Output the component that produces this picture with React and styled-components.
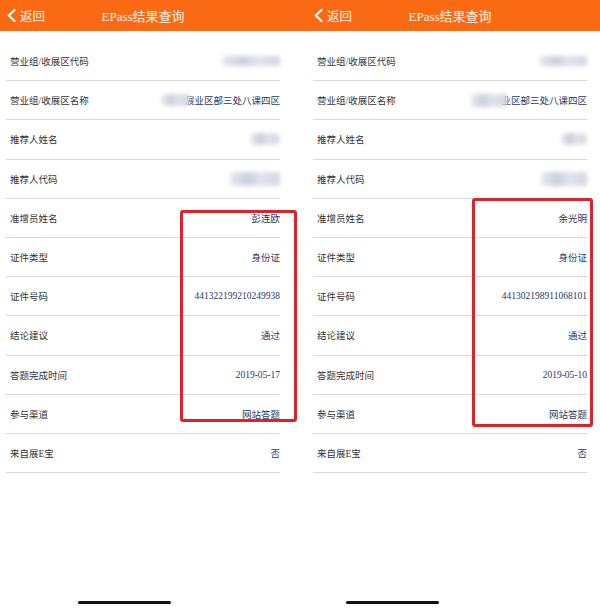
import React from 'react'
import styled, { createGlobalStyle } from 'styled-components'

const GlobalStyle = createGlobalStyle`
  html, body {
    margin: 0;
    padding: 0;
    background: #fff;
  }
  body {
    font-family: "Liberation Serif", "Noto Sans CJK SC", serif;
  }
`

const Page = styled.div`
  display: flex;
  gap: 21px;
  width: 600px;
  height: 611px;
  overflow: hidden;
  background: linear-gradient(#fa6a14 31px, #fff 31px);
`

const Phone = styled.div`
  position: relative;
  display: flex;
  flex-direction: column;
  width: 286px;
  height: 611px;
  flex-shrink: 0;
`

const Header = styled.div`
  display: grid;
  grid-template-columns: 1fr auto 1fr;
  align-items: center;
  height: 31px;
  background: #fa6a14;
  color: #fff;
`

const Back = styled.div`
  display: flex;
  align-items: center;
  gap: 4px;
  padding-left: 7px;
  font-family: "Noto Sans CJK SC", sans-serif;
  font-size: 12.5px;
  color: #fff4ec;
`

const Title = styled.div`
  font-size: 13px;
  color: #fff1e6;
`

const List = styled.div`
  display: flex;
  flex-direction: column;
  padding: 11px 6px 0;
`

const Row = styled.div`
  display: flex;
  align-items: center;
  justify-content: space-between;
  box-sizing: border-box;
  height: 39.2px;
  border-bottom: 1px solid #d9d9d9;
  padding: 0 0 0 4px;
`

const Label = styled.span`
  font-size: 9.5px;
  color: #333;
`

const Value = styled.span`
  display: flex;
  align-items: center;
  font-size: 9.5px;
  color: #283866;
  white-space: nowrap;
`

const Blur = styled.span`
  display: inline-block;
  width: ${p => p.$w}px;
  height: ${p => p.$h || 10}px;
  margin-right: ${p => p.$overlap ? -6 : 0}px;
  border-radius: ${p => p.$round ? 6 : 2}px;
  background: linear-gradient(90deg, #e8eaef, #cacfdb 35%, #e0e3ea 60%, #d3d7e1);
  filter: blur(2px);
  position: relative;
  z-index: 1;
`

const Mark = styled.div`
  position: absolute;
  box-sizing: border-box;
  left: ${p => p.$x}px;
  top: ${p => p.$y}px;
  width: ${p => p.$w}px;
  height: ${p => p.$h}px;
  border: 3px solid #e2202a;
  border-radius: 3px;
  pointer-events: none;
`

const Footer = styled.div`
  margin-top: auto;
  padding: 0 0 7px ${p => p.$barX}px;
`

const HomeBar = styled.div`
  width: 93px;
  height: 3px;
  border-radius: 2px;
  background: #111;
`

const Chevron = () => (
  <svg width="9" height="13" viewBox="0 0 9 13">
    <polyline points="7.5,1 1.8,6.5 7.5,12" fill="none" stroke="#fff" strokeWidth="2.3" strokeLinecap="round" strokeLinejoin="round" />
  </svg>
)

const screens = [
  {
    mark: { x: 180, y: 210, w: 117, h: 212 },
    barX: 78,
    rows: [
      ['营业组/收展区代码', <Blur $w={58} />],
      ['营业组/收展区名称', <><Blur $w={30} $h={12} $round $overlap />展业区部三处八课四区</>],
      ['推荐人姓名', <Blur $w={30} $h={12} $round />],
      ['推荐人代码', <Blur $w={50} $h={14} />],
      ['准增员姓名', '彭连欧'],
      ['证件类型', '身份证'],
      ['证件号码', '441322199210249938'],
      ['结论建议', '通过'],
      ['答题完成时间', '2019-05-17'],
      ['参与渠道', '网站答题'],
      ['来自展E宝', '否'],
    ],
  },
  {
    mark: { x: 165, y: 198, w: 121, h: 229 },
    barX: 39,
    rows: [
      ['营业组/收展区代码', <Blur $w={48} />],
      ['营业组/收展区名称', <><Blur $w={36} $h={13} $overlap />业区部三处八课四区</>],
      ['推荐人姓名', <Blur $w={26} $h={12} $round />],
      ['推荐人代码', <Blur $w={46} $h={14} />],
      ['准增员姓名', '余光明'],
      ['证件类型', '身份证'],
      ['证件号码', '441302198911068101'],
      ['结论建议', '通过'],
      ['答题完成时间', '2019-05-10'],
      ['参与渠道', '网站答题'],
      ['来自展E宝', '否'],
    ],
  },
]

function Screen({ rows, mark, barX }) {
  return (
    <Phone>
      <Header>
        <Back>
          <Chevron />
          返回
        </Back>
        <Title>EPass结果查询</Title>
        <div />
      </Header>
      <List>
        {rows.map(([label, value]) => (
          <Row key={label}>
            <Label>{label}</Label>
            <Value>{value}</Value>
          </Row>
        ))}
      </List>
      <Footer $barX={barX}>
        <HomeBar />
      </Footer>
      <Mark $x={mark.x} $y={mark.y} $w={mark.w} $h={mark.h} />
    </Phone>
  )
}

export default function App() {
  return (
    <>
      <GlobalStyle />
      <Page>
        {screens.map((s, i) => (
          <Screen key={i} {...s} />
        ))}
      </Page>
    </>
  )
}
